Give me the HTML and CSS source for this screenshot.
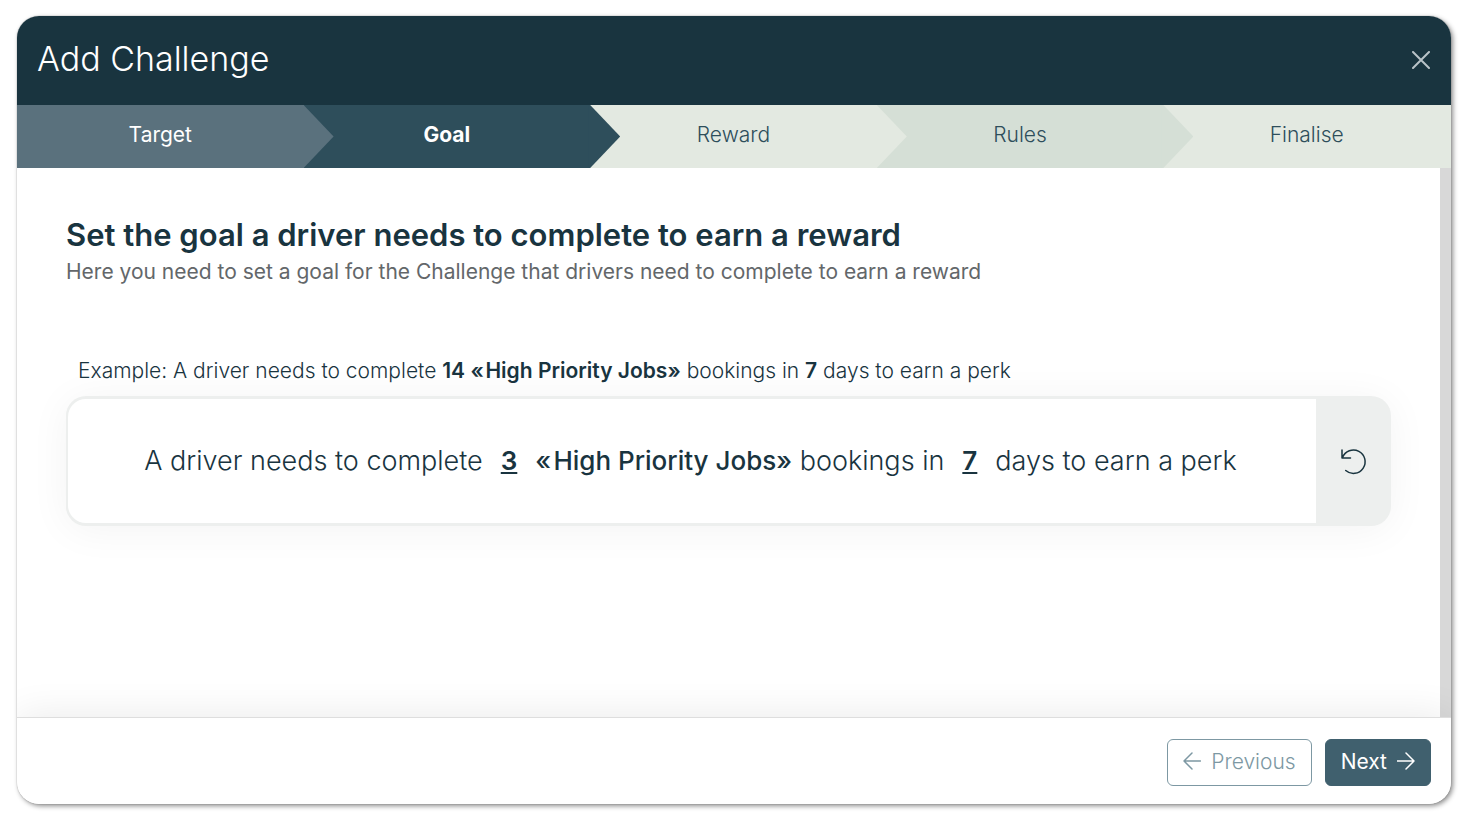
FILE: index.html
```html
<!DOCTYPE html>
<html lang="en">
<head>
  <meta charset="UTF-8" />
  <meta name="viewport" content="width=device-width, initial-scale=1" />
  <title>Add Challenge</title>
  <link rel="stylesheet" href="styles.css">
</head>
<body>

  <div class="modal" role="dialog" aria-labelledby="modalTitle">
    <header class="modal-header">
      <h1 id="modalTitle">Add Challenge</h1>
      <button type="button" class="btn-close" aria-label="Close">
        <svg width="18" height="18" viewBox="0 0 18 18"><path d="M1 1L17 17M17 1L1 17" /></svg>
      </button>
    </header>

    <!-- Wizard steps -->
    <ol class="steps">
      <li class="step done">Target</li>
      <li class="step active">Goal</li>
      <li class="step">Reward</li>
      <li class="step alt">Rules</li>
      <li class="step">Finalise</li>
    </ol>

    <div class="modal-body">
      <main class="content">
        <h2>Set the goal a driver needs to complete to earn a reward</h2>
        <p class="subtitle">Here you need to set a goal for the Challenge that drivers need to complete to earn a reward</p>

        <p class="example">Example: A driver needs to complete <b>14 «&#8202;High Priority Jobs»</b> bookings in <b>7</b> days to earn a perk</p>

        <div class="goal">
          <div class="goal-text">
            <span>A driver needs to complete</span>
            <button type="button" class="value">3</button>
            <span><b>«&#8202;High Priority Jobs»</b> bookings in</span>
            <button type="button" class="value">7</button>
            <span>days to earn a perk</span>
          </div>
          <button type="button" class="btn-reset" aria-label="Reset">
            <svg width="28" height="28" viewBox="0 0 28 28"><path d="M2 3V11H10.500M2.500 10.500A11.700 11.700 0 1 1 5.700 23.500" /></svg>
          </button>
        </div>
      </main>
      <div class="scroll-track"></div>
    </div>

    <footer class="modal-footer">
      <button type="button" class="btn btn-previous">
        <svg width="18" height="18" viewBox="0 0 18 18"><path d="M17.500 9H1M9 1L1 9L9 17" /></svg>
        Previous
      </button>
      <button type="button" class="btn btn-next">
        Next
        <svg width="18" height="18" viewBox="0 0 18 18"><path d="M0 9H17M9 1L17 9L9 17" /></svg>
      </button>
    </footer>
  </div>

</body>
</html>
```
FILE: styles.css
```css
* {
  box-sizing: border-box;
}

body {
  font-family: Inter, "Open Sans", sans-serif;
  font-weight: 300;
  background: #fff;
  color: #19343f;
  margin: 0;
  height: 100vh;
  padding: 16px 18px 21px 17px;
}

h1, h2, p, ol {
  margin: 0;
  padding: 0;
}

button {
  font: inherit;
  color: inherit;
  background: none;
  border: none;
  padding: 0;
  cursor: pointer;
}

svg {
  display: block;
  fill: none;
  stroke: currentColor;
  stroke-linecap: round;
  stroke-linejoin: round;
}

b {
  font-weight: 600;
}

.modal {
  display: flex;
  flex-direction: column;
  height: 100%;
  background: #fff;
  border-radius: 22px;
  overflow: hidden;
  box-shadow: 2px 2px 5px rgba(0,0,0,0.45), 0 0 1px rgba(0,0,0,0.5);
}

.modal-header {
  display: flex;
  justify-content: space-between;
  align-items: center;
  height: 89px;
  padding: 0 21px 4px 20px;
  background: #19343f;
  color: #fff;
}

.modal-header h1 {
  font-size: 34px;
  line-height: 40px;
  font-weight: 300;
}

.btn-close {
  color: #b9c3c8;
  padding-top: 3px;
}

.btn-close svg {
  stroke-width: 2;
}

.steps {
  display: flex;
  list-style: none;
  padding-right: 1px;
  background: #e3e9e1;
}

.step {
  position: relative;
  flex: 1;
  height: 63px;
  line-height: 60px;
  text-align: center;
  font-size: 21px;
  font-weight: 300;
  background: #e3e9e1;
  color: #2e4e5b;
}

/* arrow head over the next step */
.step:not(:last-child)::after {
  content: "";
  position: absolute;
  z-index: 1;
  top: 0;
  left: calc(100% - 2px);
  width: 32px;
  height: 100%;
  background: inherit;
  clip-path: polygon(0 0, 2px 0, 100% 50%, 2px 100%, 0 100%);
}

.step.done {
  background: #5a717d;
  color: #fff;
  font-weight: 400;
}

.step.active {
  background: #2e4e5b;
  color: #fff;
  font-weight: 700;
}

.step.alt {
  background: #d5dfd6;
}

.modal-body {
  display: flex;
  flex: 1;
  min-height: 0;
}

.content {
  flex: 1;
  padding: 47px 49px 0;
  overflow: hidden;
}

.content h2 {
  font-size: 31px;
  line-height: 40px;
  font-weight: 600;
}

.subtitle {
  font-size: 21px;
  line-height: 34px;
  font-weight: 400;
  color: #63676a;
}

.example {
  font-size: 21px;
  line-height: 28px;
  margin-top: 68px;
  padding-left: 12px;
}

.goal {
  display: flex;
  height: 130px;
  margin-top: 11px;
  border-radius: 20px;
  background: #edefee;
  box-shadow: 0 4px 40px rgba(0,0,0,0.05);
}

.goal-text {
  display: flex;
  flex: 1;
  align-items: center;
  justify-content: center;
  gap: 18px;
  margin: 1px 0;
  padding: 0 3px 2px 0;
  background: #fff;
  border: 2px solid #edefee;
  border-right: none;
  border-radius: 20px 0 0 20px;
  font-size: 27px;
  white-space: nowrap;
}

.goal-text b {
  font-size: 26px;
  font-weight: 500;
}

.value {
  font-size: 26px;
  font-weight: 600;
  text-decoration: underline;
}

.btn-reset {
  display: flex;
  align-items: center;
  justify-content: center;
  width: 75px;
}

.btn-reset svg {
  stroke-width: 1.500;
}

.scroll-track {
  width: 11px;
  background: #d8d8d8;
}

.modal-footer {
  position: relative;
  display: flex;
  justify-content: flex-end;
  align-items: center;
  gap: 13px;
  height: 87px;
  padding: 3px 20px 0;
  background: #fff;
  border-top: 1px solid #dedede;
  box-shadow: 0 0 40px rgba(0,0,0,0.09);
}

.btn {
  display: flex;
  align-items: center;
  gap: 10px;
  height: 47px;
  padding: 0 15px 3px;
  border: 1px solid #7d98a3;
  border-radius: 6px;
  font-size: 21px;
}

.btn-previous {
  color: #7d98a3;
}

.btn-next {
  background: #40606e;
  border-color: #40606e;
  color: #fff;
  font-weight: 400;
}

.btn svg {
  stroke-width: 1.500;
}
```
